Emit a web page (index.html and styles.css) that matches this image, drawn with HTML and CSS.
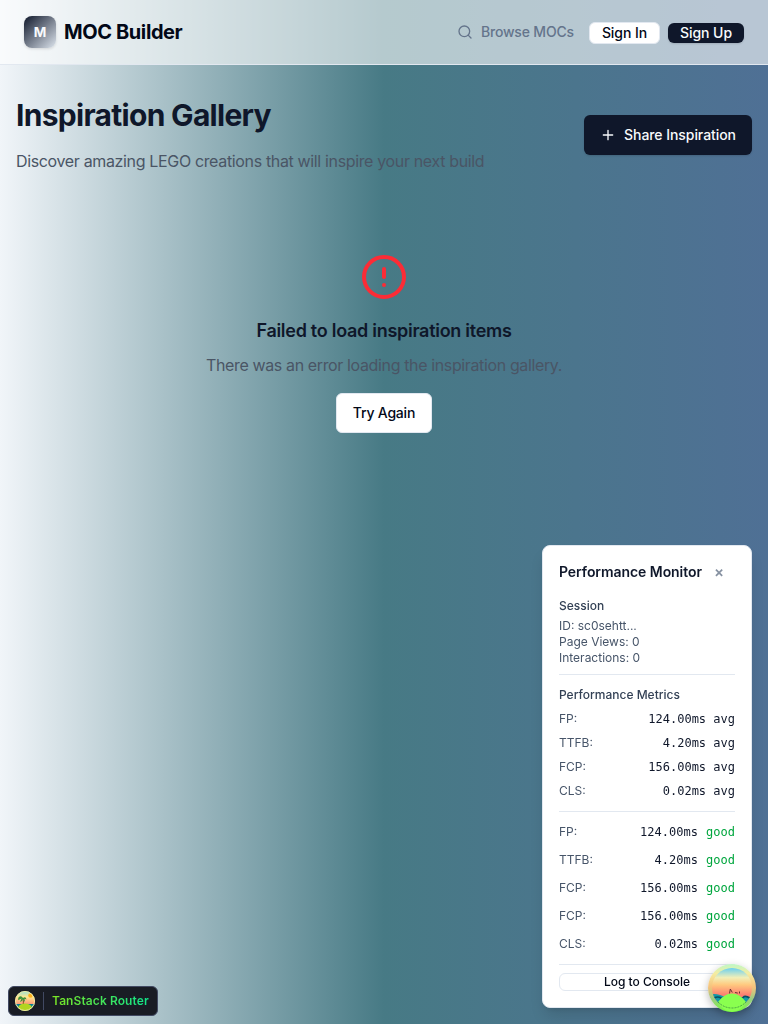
FILE: index.html
```html
<!DOCTYPE html>
<html lang="en">
<head>
<meta charset="utf-8">
<title>MOC Builder</title>
<link rel="stylesheet" href="styles.css">
</head>
<body>
<header class="navbar">
  <a class="brand"><span class="logo">M</span><span class="brand-name">MOC Builder</span></a>
  <nav class="nav">
    <a class="browse">
      <svg class="icon" viewBox="0 0 24 24"><circle cx="11" cy="11" r="8"/><path d="m21 21-4.3-4.3"/></svg>
      <span>Browse MOCs</span>
    </a>
    <button class="btn btn-outline btn-small sign-in">Sign In</button>
    <button class="btn btn-primary btn-small sign-up">Sign Up</button>
  </nav>
</header>
<main class="content">
  <section class="intro">
    <div>
      <h1 class="title">Inspiration Gallery</h1>
      <p class="subtitle">Discover amazing LEGO creations that will inspire your next build</p>
    </div>
    <button class="btn btn-primary share">
      <svg class="icon" viewBox="0 0 24 24"><path d="M5 12h14M12 5v14"/></svg>
      <span>Share Inspiration</span>
    </button>
  </section>
  <section class="error">
    <svg class="error-icon" viewBox="0 0 24 24"><circle cx="12" cy="12" r="10"/><path d="M12 8v4M12 16h.01"/></svg>
    <h2 class="error-title">Failed to load inspiration items</h2>
    <p class="error-text">There was an error loading the inspiration gallery.</p>
    <button class="btn btn-outline retry">Try Again</button>
  </section>
</main>
<aside class="monitor">
  <div class="monitor-head"><h3 class="monitor-title">Performance Monitor</h3><span class="close">×</span></div>
  <div class="session">
    <h4 class="label">Session</h4>
    <p>ID: sc0sehtt...</p>
    <p>Page Views: 0</p>
    <p>Interactions: 0</p>
  </div>
  <div class="averages">
    <h4 class="label">Performance Metrics</h4>
    <div class="row"><span>FP:</span><span class="value">124.00ms avg</span></div>
    <div class="row"><span>TTFB:</span><span class="value">4.20ms avg</span></div>
    <div class="row"><span>FCP:</span><span class="value">156.00ms avg</span></div>
    <div class="row"><span>CLS:</span><span class="value">0.02ms avg</span></div>
  </div>
  <div class="samples">
    <div class="row"><span>FP:</span><span class="value">124.00ms <b class="good">good</b></span></div>
    <div class="row"><span>TTFB:</span><span class="value">4.20ms <b class="good">good</b></span></div>
    <div class="row"><span>FCP:</span><span class="value">156.00ms <b class="good">good</b></span></div>
    <div class="row"><span>FCP:</span><span class="value">156.00ms <b class="good">good</b></span></div>
    <div class="row"><span>CLS:</span><span class="value">0.02ms <b class="good">good</b></span></div>
  </div>
  <div class="actions"><button class="btn btn-outline log">Log to Console</button></div>
</aside>
<div class="router-tools">
  <svg class="router-logo" viewBox="0 0 20 20">
    <defs>
      <linearGradient id="sunset" x1="0" y1="0" x2="0" y2="1"><stop offset="0" stop-color="#8fe0dc"/><stop offset=".3" stop-color="#ffe88e"/><stop offset=".75" stop-color="#fa8272"/></linearGradient>
      <clipPath id="disc"><circle cx="10" cy="10" r="10"/></clipPath>
    </defs>
    <g clip-path="url(#disc)">
      <rect width="20" height="20" fill="url(#sunset)"/>
      <circle cx="15.5" cy="4.5" r="2.3" fill="#ffb21c"/>
      <rect y="13" width="20" height="7" fill="#087f91"/>
      <path d="M8 7q.8 4-.1 9" fill="none" stroke="#79431e" stroke-width="1"/>
      <path d="M8 7Q6 3.800 3.300 6.700l-.2 2.500L6.500 7.500 5 11q2.500-.5 3-3l1 3q1.500-1 .5-3.200l2 .7Q10.800 5 8 7z" fill="#3b923b"/>
      <ellipse cx="10" cy="16.500" rx="6.800" ry="4" fill="#b2d51f"/>
    </g>
    <circle cx="10" cy="10" r="9.500" fill="none" stroke="#f0e9a0" stroke-width="1"/>
  </svg>
  <span class="router-name">TanStack Router</span>
</div>
<div class="query-tools">
  <svg class="query-logo" viewBox="0 0 48 48">
    <defs>
      <linearGradient id="ring" x1="0" y1="0" x2="0" y2="1"><stop offset="0" stop-color="#bef8c6"/><stop offset=".2" stop-color="#f5eca1"/><stop offset=".48" stop-color="#f6c17b"/><stop offset=".73" stop-color="#9acb82"/><stop offset="1" stop-color="#75ff38"/></linearGradient>
      <linearGradient id="sky" x1="0" y1="0" x2="0" y2="1"><stop offset="0" stop-color="#69cff0"/><stop offset=".24" stop-color="#f1efb8"/><stop offset=".42" stop-color="#ffc97f"/><stop offset=".68" stop-color="#fb7d70"/></linearGradient>
      <clipPath id="view"><circle cx="24" cy="24" r="20"/></clipPath>
    </defs>
    <circle cx="24" cy="24" r="24" fill="url(#ring)"/>
    <g clip-path="url(#view)">
      <rect x="4" y="4" width="40" height="40" fill="url(#sky)"/>
      <path d="M4 30q4-.5 8 1t9 2.600 9 0 14-.5v12H4z" fill="#129ba8"/>
      <path d="M6 34q4-2 7 0t6-.5M29 34q4 2 6-.5t7 .5" fill="none" stroke="#064f66" stroke-width="1.600"/>
    </g>
    <path d="M21.500 29.500l.8-4.500 2 3.500M27 28.500l2.800.6M31.500 29.500v-2" fill="none" stroke="#6b3031" stroke-width="1"/>
    <path d="M10 38Q16 29.500 24 29.500T38 38q-5 9.500-14 9.500T10 38z" fill="#8aff4f"/>
    <path d="M10 38Q16 44 24 44t14-6" fill="none" stroke="#236641" stroke-width=".6" stroke-dasharray="2 1"/>
  </svg>
</div>
</body>
</html>
```
FILE: styles.css
```css
* { box-sizing: border-box; }
body {
  margin: 0;
  min-height: 1024px;
  font-family: Inter, sans-serif;
  font-size: 16px;
  line-height: 24px;
  color: #020817;
  background: linear-gradient(90deg, #f1f5f9 0%, #477a85 50%, #4f7095 100%);
}
h1, h2, h3, h4, p { margin: 0; }
svg { display: block; flex-shrink: 0; }
.navbar {
  height: 65px;
  padding: 0 24px;
  display: flex;
  align-items: center;
  justify-content: space-between;
  background: rgba(255,255,255,.6);
  border-bottom: 1px solid #e2e8f0;
}
.brand { display: flex; align-items: center; gap: 8px; }
.logo {
  width: 32px;
  height: 32px;
  display: grid;
  place-items: center;
  border-radius: 8px;
  color: #f8fafc;
  font-size: 13.5px;
  font-weight: 700;
  background: linear-gradient(135deg, #0f172a, #dce4ed);
  box-shadow: 0 1px 3px #0002;
}
.brand-name { font-size: 20px; font-weight: 700; line-height: 28px; letter-spacing: -.4px; }
.nav { display: flex; align-items: center; }
.browse { display: flex; align-items: center; gap: 8px; margin-right: 15px; color: #64748b; font-size: 14px; font-weight: 500; letter-spacing: -.17px; }
.icon { width: 16px; height: 16px; fill: none; stroke: currentColor; stroke-width: 2; stroke-linecap: round; stroke-linejoin: round; }
.btn {
  display: inline-flex;
  align-items: center;
  justify-content: center;
  border: 0;
  border-radius: 6px;
  padding: 0;
  font: 500 14px/20px Inter, sans-serif;
  letter-spacing: -.06px;
  white-space: nowrap;
}
.btn-primary { color: #f8fafc; background: #0f172a; box-shadow: 0 1px 2px #0002; }
.btn-outline { color: #020817; background: #fff; border: 1px solid #e2e8f0; }
.btn-small { height: 20px; }
.sign-in { width: 71px; height: 22px; margin-top: 2px; margin-right: 8px; }
.sign-up { width: 76px; margin-top: 2px; }
.content { padding: 32px 16px; }
.intro { display: flex; justify-content: space-between; align-items: center; height: 76px; }
.title { font-size: 30px; line-height: 36px; font-weight: 700; letter-spacing: -.7px; color: #0f172a; margin-bottom: 16px; }
.subtitle { color: #4a5565; letter-spacing: -.35px; }
.share { width: 168px; height: 40px; gap: 8px; }
.error { display: flex; flex-direction: column; align-items: center; padding-top: 80px; }
.error-icon { width: 52px; height: 48px; fill: none; stroke: #fb2c36; stroke-width: 2; stroke-linecap: round; stroke-linejoin: round; }
.error-title { margin-top: 16px; font-size: 18px; line-height: 28px; font-weight: 600; letter-spacing: -.28px; color: #0f172a; }
.error-text { margin-top: 8px; color: #4a5565; letter-spacing: -.37px; }
.retry { width: 96px; height: 40px; margin-top: 16px; letter-spacing: -.2px; }
.monitor {
  position: fixed;
  right: 16px;
  bottom: 16px;
  width: 210px;
  height: 463px;
  padding: 16px;
  border: 1px solid #e2e8f0;
  border-radius: 8px;
  background: #fff;
  box-shadow: 0 10px 15px -3px #0002, 0 4px 6px -4px #0002;
  color: #475569;
  font-size: 12px;
  line-height: 16px;
}
.monitor-head { display: flex; align-items: center; gap: 12px; height: 20px; margin-bottom: 16px; }
.monitor-title { color: #0f172a; font-size: 14px; font-weight: 600; line-height: 20px; letter-spacing: -.06px; }
.close { color: #8792a2; font-size: 15px; font-weight: 600; }
.label { color: #334155; font-size: 12px; line-height: 16px; font-weight: 500; margin-bottom: 4px; }
.averages, .samples, .actions { border-top: 1px solid #e2e8f0; }
.session { height: 76px; }
.averages { height: 137px; padding-top: 12px; }
.averages .label { margin-bottom: 8px; }
.averages .row { margin-bottom: 8px; }
.row { display: flex; justify-content: space-between; align-items: center; height: 16px; }
.value { font-family: "DejaVu Sans Mono", monospace; color: #0f172a; }
.good { color: #00a63e; font-weight: 400; margin-left: 1px; }
.samples { height: 153px; padding-top: 12px; }
.samples .row { margin-bottom: 12px; }
.actions { padding-top: 8px; }
.log { width: 100%; height: 18px; font-size: 12px; line-height: 16px; letter-spacing: 0; }
.router-tools {
  position: fixed;
  left: 8px;
  bottom: 8px;
  width: 150px;
  height: 30px;
  padding: 0 7px 0 6px;
  display: flex;
  align-items: center;
  gap: 8px;
  border: 1px solid #414962;
  border-radius: 6px;
  background: #191c24;
}
.router-logo { width: 20px; height: 20px; }
.router-name {
  padding-left: 8px;
  border-left: 1px solid #414962;
  font-size: 12px;
  line-height: 18px;
  font-weight: 600;
  letter-spacing: .09px;
  white-space: nowrap;
  color: transparent;
  background: linear-gradient(90deg, #84e51b, #10e68b);
  -webkit-background-clip: text;
  background-clip: text;
}
.query-tools { position: fixed; right: 12px; bottom: 12px; width: 48px; height: 48px; border-radius: 50%; box-shadow: 0 3px 8px #0004; }
.query-logo { width: 48px; height: 48px; }
```
